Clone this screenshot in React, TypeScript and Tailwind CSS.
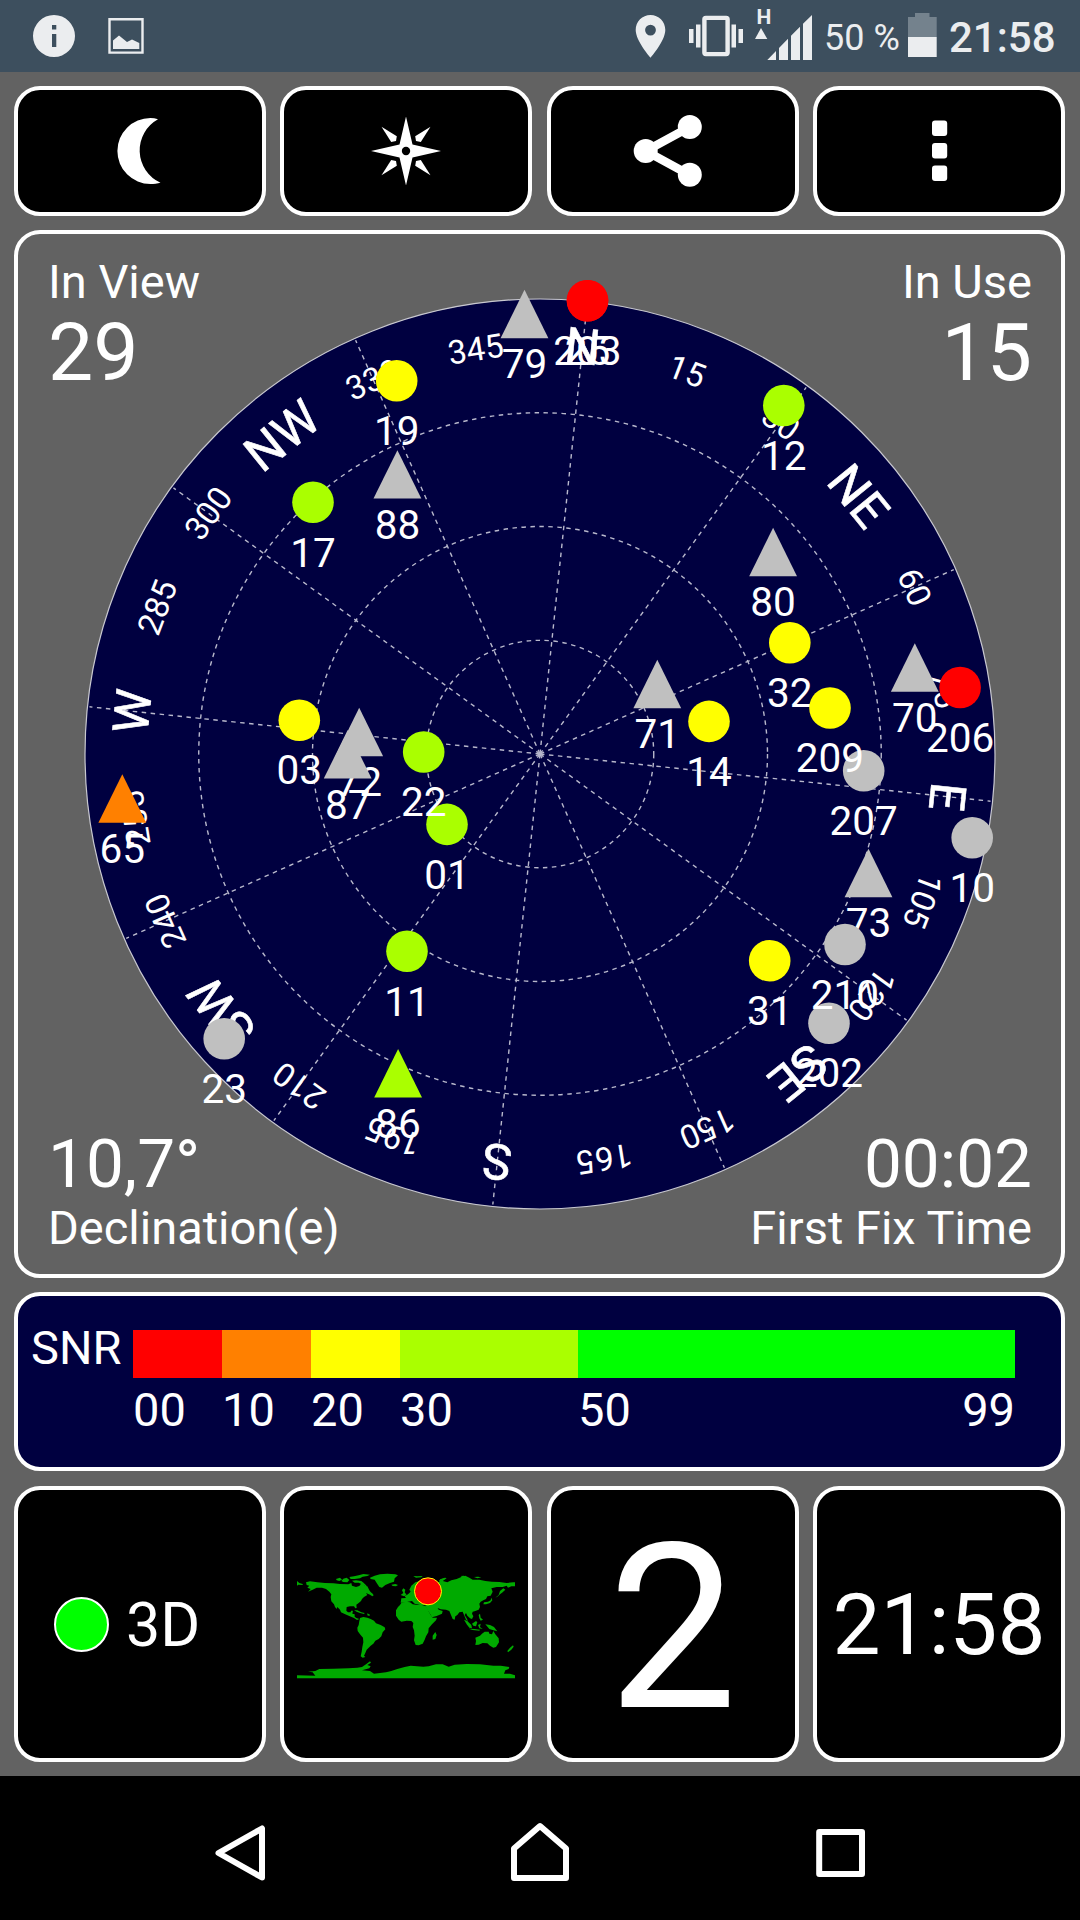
import React from 'react';

type Sat = { id: string; x: number; y: number; color: string; shape?: 'triangle' };

const GRAY = '#c0c0c0';
const RED = '#ff0000';
const ORANGE = '#ff8000';
const YELLOW = '#ffff00';
const LIME = '#aaff00';
const GREEN = '#00ff00';

// drawn in order, later ones lie on top
const satellites: Sat[] = [
  { id: '01', x: 447, y: 824.4, color: LIME },
  { id: '03', x: 299.3, y: 720.2, color: YELLOW },
  { id: '10', x: 972.2, y: 837.8, color: GRAY },
  { id: '11', x: 407, y: 951.3, color: LIME },
  { id: '12', x: 783.8, y: 405.5, color: LIME },
  { id: '14', x: 709, y: 721.4, color: YELLOW },
  { id: '17', x: 313, y: 502.3, color: LIME },
  { id: '19', x: 396.7, y: 380.7, color: YELLOW },
  { id: '22', x: 423.7, y: 752, color: LIME },
  { id: '23', x: 224.2, y: 1038.7, color: GRAY },
  { id: '31', x: 769.7, y: 960.7, color: YELLOW },
  { id: '32', x: 789.8, y: 642.8, color: YELLOW },
  { id: '65', x: 122.3, y: 798.5, color: ORANGE, shape: 'triangle' },
  { id: '70', x: 914.8, y: 667.5, color: GRAY, shape: 'triangle' },
  { id: '71', x: 657.3, y: 684, color: GRAY, shape: 'triangle' },
  { id: '72', x: 359.2, y: 732, color: GRAY, shape: 'triangle' },
  { id: '73', x: 868.5, y: 873, color: GRAY, shape: 'triangle' },
  { id: '79', x: 524.5, y: 314, color: GRAY, shape: 'triangle' },
  { id: '80', x: 773.1, y: 552, color: GRAY, shape: 'triangle' },
  { id: '86', x: 398.1, y: 1073.3, color: LIME, shape: 'triangle' },
  { id: '87', x: 347.7, y: 754.3, color: GRAY, shape: 'triangle' },
  { id: '88', x: 397.4, y: 474.4, color: GRAY, shape: 'triangle' },
  { id: '202', x: 829, y: 1023.2, color: GRAY },
  { id: '25', x: 587.5, y: 300.8, color: RED },
  { id: '203', x: 587.5, y: 300.8, color: RED },
  { id: '206', x: 960.1, y: 687.5, color: RED },
  { id: '207', x: 863.7, y: 770.8, color: GRAY },
  { id: '209', x: 830, y: 708, color: YELLOW },
  { id: '210', x: 845, y: 944.5, color: GRAY },
];

const directions: Record<number, string> = {
  0: 'N', 45: 'NE', 90: 'E', 135: 'SE', 180: 'S', 225: 'SW', 270: 'W', 315: 'NW',
};

const CX = 540;
const CY = 754;
const R = 455;
const HEADING = 5.98;

function Radar() {
  const bearings = Array.from({ length: 24 }, (_, i) => i * 15);
  return (
    <svg className="absolute left-0 top-0" width="1043" height="1040" viewBox="18 234 1043 1040">
      <circle cx={CX} cy={CY} r={R} fill="#000040" stroke="#c8c8d0" strokeWidth="1.2" />
      <g fill="none" stroke="#b8b8cc" strokeWidth="1.4" strokeDasharray="4.5 4.5">
        {[0.25, 0.5, 0.75].map((f) => (
          <circle key={f} cx={CX} cy={CY} r={R * f} />
        ))}
        {bearings.filter((b) => b % 30 === 0).map((b) => (
          <line key={b} x1={CX} y1={CY} x2={CX} y2={CY - R + 2} transform={`rotate(${b + HEADING} ${CX} ${CY})`} />
        ))}
      </g>
      <g fill="#fff" textAnchor="middle">
        {bearings.map((b) => (
          <text
            key={b}
            x={CX}
            y={CY - 410 + (directions[b] ? 17.5 : 11.5)}
            fontSize={directions[b] ? 49.5 : 33}
            transform={`rotate(${b + HEADING} ${CX} ${CY})`}
            className={directions[b] ? 'stroke-white [stroke-width:0.6px]' : ''}
          >
            {directions[b] ?? b}
          </text>
        ))}
      </g>
      <g fontSize="40.5" textAnchor="middle">
        {satellites.map((s) => (
          <g key={s.id}>
            {s.shape === 'triangle' ? (
              <path d={`M${s.x} ${s.y - 24.2}l23.9 48.4h-47.8z`} fill={s.color} />
            ) : (
              <circle cx={s.x} cy={s.y} r="20.8" fill={s.color} />
            )}
            <text x={s.x} y={s.y + 64.2} fill="#fff">{s.id}</text>
          </g>
        ))}
      </g>
    </svg>
  );
}

const snrBands = [
  { from: '00', width: 89, color: RED },
  { from: '10', width: 89, color: ORANGE },
  { from: '20', width: 89, color: YELLOW },
  { from: '30', width: 178, color: LIME },
  { from: '50', width: 437, color: GREEN },
];

function SnrBar() {
  return (
    <div className="mt-[14px] flex h-[179px] rounded-[26px] border-4 border-white bg-[#000040] pl-[13px] pt-[34px] text-[47px] leading-none">
      <span className="mt-[-6px] w-[102px] shrink-0">SNR</span>
      <div>
        <div className="flex h-12">
          {snrBands.map((b) => (
            <div key={b.from} style={{ width: b.width, background: b.color }} />
          ))}
        </div>
        <div className="mt-[8px] flex">
          {snrBands.map((b, i) => (
            <div key={b.from} className="flex justify-between" style={{ width: b.width }}>
              <span>{b.from}</span>
              {i === snrBands.length - 1 && <span>99</span>}
            </div>
          ))}
        </div>
      </div>
    </div>
  );
}

function StatusBar() {
  return (
    <div className="flex h-[72px] bg-[#3d4f5e]">
      <svg width="150" height="72" viewBox="0 0 150 72" fill="#ebedef">
        <path fillRule="evenodd" d="M54 15a21 21 0 1 0 0 42 21 21 0 0 0 0-42zM52 25h4.3v4.5H52zM52 34h4.3v13H52z" />
        <path d="M109.500 19.300h33v33.300h-33z" fill="none" stroke="#ebedef" strokeWidth="2.400" />
        <path d="M113 49V40.500L119 35.500L127 42L132 39.500L139.300 43V49z" />
      </svg>
      <svg className="ml-[480px]" width="190" height="72" viewBox="630 0 190 72" fill="#ebedef">
        <path fillRule="evenodd" d="M650.500 15c-8.200 0-14.800 6.600-14.800 15 0 11 14.800 27.700 14.800 27.700s14.800-16.700 14.800-27.700c0-8.400-6.600-15-14.800-15zm0 20.500a5.400 5.400 0 1 1 0-10.800 5.400 5.400 0 0 1 0 10.800z" />
        <path d="M689 29h4.500v14H689zM696 24.500h4.500v23H696zM731.500 24.500h4.500v23h-4.500zM738.500 29h4.500v14h-4.500z" />
        <rect x="704.400" y="17.900" width="23.200" height="36.200" rx="1.500" fill="none" stroke="#ebedef" strokeWidth="4.400" />
        <text x="763.800" y="24" textAnchor="middle" fontSize="21" fontWeight="700">H</text>
        <path d="M761 28L767.300 39H755z" />
        <path d="M767.300 60L776 51V60zM779 47.900L788 38.800V60H779zM791 35.800L800 26.700V60H791zM803 23.700L812 15V60H803z" />
      </svg>
      <span className="ml-[4px] w-[84px] text-[36px] leading-[76px] whitespace-nowrap text-[#ebedef]">50 %</span>
      <svg width="29" height="72" viewBox="908 0 29 72">
        <path d="M908 17h7v-4h14.500v4h7.200v20H908z" fill="#74828d" />
        <path d="M908 37h28.700v20H908z" fill="#ebedef" />
      </svg>
      <span className="ml-[12px] text-[42px] font-medium leading-[76px] text-[#ebedef]">21:58</span>
    </div>
  );
}

const MoonIcon = () => (
  <svg width="44" height="68" viewBox="117 117 44 68" fill="#fff" className="mr-[2px]">
    <path d="M158 119.300C155.500 118.400 153 118 150.400 118a33 33 0 0 0 0 66c3.500 0 7-.4 10.100-1.300A35.500 35.500 0 0 1 158 119.300z" />
  </svg>
);

const CompassIcon = () => (
  <svg width="72" height="72" viewBox="-36 -36 72 72" fill="#fff">
    <path d="M0-34.500L6.500-6.500L35 0L6.500 6.500L0 34.500L-6.500 6.500L-35 0L-6.500-6.500z" />
    {['scale(1 1)', 'scale(-1 1)', 'scale(1 -1)', 'scale(-1 -1)'].map((t) => (
      <path key={t} transform={t} d="M-24.500-24.200L-9.200-14.700L-10-10L-14.800-9z" />
    ))}
    <circle r="4.200" fill="#000" />
  </svg>
);

const ShareIcon = () => (
  <svg width="70" height="74" viewBox="633 114 70 74" fill="#fff" className="mr-[10px]">
    <path d="M689.800 127L645.700 151L689.800 175" fill="none" stroke="#fff" strokeWidth="8.500" />
    <circle cx="645.700" cy="151" r="12" />
    <circle cx="689.800" cy="127" r="12" />
    <circle cx="689.800" cy="174.700" r="12" />
  </svg>
);

const MoreIcon = () => (
  <svg width="16" height="62" viewBox="0 0 16 62" fill="#fff" className="ml-[1px]">
    <rect y=".5" width="15.200" height="15.500" rx="3" />
    <rect y="23" width="15.200" height="15.500" rx="3" />
    <rect y="45.500" width="15.200" height="15.500" rx="3" />
  </svg>
);

function WorldMap() {
  return (
    <svg width="218" height="106" viewBox="51 68 654 318" fill="#00aa00" className="mt-[3px]">
      {/* Americas */}
      <path d="M51 92L58 98L68 101V104L55 103L51 106zM78 96L90 93L112 96L135 98L160 99L180 101L205 102L214 98L216 106L228 110L238 107L243 100L240 96L250 97L254 106L262 108L268 120L274 128L270 133L258 128L262 134L252 140L246 146L243 152L236 158L229 163L230 173L226 174L222 168L210 168L200 170L199 181L204 186L212 186L213 181L219 181L217 190L224 192L224 199L229 203L238 206L231 209L222 203L206 196L194 191L183 186L180 178L172 170L170 176L165 170L162 162L154 153L152 140L154 132L148 124L138 116L126 112L110 112L98 118L84 124L92 116L82 112L88 106L80 104z" />
      <path d="M270 126L276 128L281 135L277 138L270 133z" />
      <path d="M168 86L180 82L186 88L178 92L170 90zM190 85L200 82L208 89L202 96L190 95L184 92zM208 80L222 78L236 75L250 71L270 73L262 77L248 79L240 84L224 86L212 86zM216 91L228 90L244 92L252 99L260 106L256 108L246 102L236 97L224 97z" />
      <path d="M222 180L232 180L244 186L254 188L252 191L240 188L230 184zM262 189L270 193L268 197L262 195z" />
      <path d="M240 203L250 200L262 202L272 206L282 211L288 219L302 224L314 231L316 237L308 246L304 258L296 266L286 271L280 280L272 286L266 292L260 298L256 308L252 316L256 320L248 322L242 318L245 304L247 290L250 276L249 262L240 252L233 242L232 232L236 224L238 212z" />
      {/* Greenland, Iceland */}
      <path d="M270 82L284 76L300 72L322 70L346 72L354 75L344 84L342 94L330 98L316 104L306 112L298 110L290 98L284 88L272 86zM334 103L346 101L354 104L348 108L338 107z" />
      {/* Eurasia */}
      <path d="M374 157L362 157L364 144L378 143L374 138L384 132L392 124L388 118L394 106L406 96L422 91L436 96L452 94L466 97L478 95L480 88L494 82L500 84L488 92L502 96L514 90L530 86L544 80L556 76L568 82L578 88L598 88L616 92L636 94L658 95L680 98L700 96L705 96V108L694 108L684 112L680 106L668 110L650 110L634 114L638 124L632 136L622 138L618 146L610 150L602 154L598 160L600 170L596 178L586 182L578 184L576 190L580 198L576 206L570 204L562 196L558 188L554 194L560 204L564 212L558 208L553 196L548 184L538 186L532 194L526 198L524 208L518 206L512 192L508 182L498 178L482 177L472 172L468 164L476 178L488 182L486 190L470 197L456 201L450 190L440 176L436 164L420 164L404 160L396 152L384 154z" />
      <path d="M362 134L370 128L366 120L370 114L376 118L374 126L380 134L372 138zM400 77L412 78L428 77L424 81L408 82zM476 92L482 86L498 82L492 88L482 94zM542 77L552 76L560 81L550 83zM582 80L594 79L604 81L592 84z" />
      {/* Japan, Kamchatka */}
      <path d="M660 122L670 114L676 118L668 126L660 132L654 138L646 142L656 134zM634 142L637 150L630 158L618 162L610 162L612 156L624 154L632 150z" />
      {/* Africa */}
      <path d="M364 158L378 154L390 156L398 162L412 164L426 164L438 168L444 180L452 194L458 202L471 202L468 210L456 222L446 234L445 246L438 258L434 268L428 280L416 285L407 284L402 270L404 256L402 240L398 230L400 218L394 212L380 211L364 214L356 208L348 196L348 180L354 170L360 164zM466 245L470 254L466 266L458 268L458 256z" />
      {/* Oceania */}
      <path d="M552 208L562 212L574 224L576 234L568 232L560 222zM576 220L588 212L592 216L588 228L580 226zM566 235L584 236L600 238L598 241L578 239zM596 194L600 190L602 202L609 208L602 211L598 204zM594 224L602 220L600 230L608 236L598 234zM616 222L630 224L642 230L652 243L640 240L628 236z" />
      <path d="M586 262L600 256L606 250L614 244L626 244L628 250L636 252L640 242L646 252L656 264L657 276L648 290L640 292L630 286L622 279L608 278L596 283L586 284L588 272zM690 292L699 285L701 289L694 298L684 306L682 302z" />
      {/* Antarctica */}
      <path d="M51 384V375L106 376L98 366L84 364L106 362L118 356L160 355L206 354L232 352L246 350L258 342L270 333L273 337L262 344L272 348L268 354L246 360L270 362L282 370L300 368L318 366L334 362L352 356L374 350L392 346L430 349L446 348L468 342L488 342L506 349L524 343L560 341L600 342L640 346L662 346L688 350L686 356L676 360L672 370L690 370L705 375V384z" />
      <circle cx="444" cy="123" r="40.500" fill="#ff0000" stroke="#ffff00" strokeWidth="3" />
    </svg>
  );
}

function Box({ className = 'justify-center', children }: { className?: string; children: React.ReactNode }) {
  return (
    <div className={`flex items-center rounded-[26px] border-4 border-white bg-black ${className}`}>
      {children}
    </div>
  );
}

export default function App() {
  return (
    <div className="flex h-[1920px] w-[1080px] flex-col overflow-hidden bg-[#626262] font-[Roboto,sans-serif] text-white">
      <StatusBar />

      <main className="flex h-[1704px] flex-col pl-[14px] pr-[15px] pt-[14px]">
        <div className="grid h-[130px] grid-cols-4 gap-[14.4px]">
          <Box><MoonIcon /></Box>
          <Box><CompassIcon /></Box>
          <Box><ShareIcon /></Box>
          <Box><MoreIcon /></Box>
        </div>

        <div className="relative mt-[14px] flex h-[1048px] flex-col justify-between rounded-[26px] border-4 border-white pb-[18px] pl-[30px] pr-[29px] pt-[20px]">
          <Radar />
          <div className="relative flex justify-between">
            <div>
              <div className="text-[47px] leading-[56px]">In View</div>
              <div className="text-[80.500px] leading-[85px]">29</div>
            </div>
            <div className="text-right">
              <div className="text-[47px] leading-[56px]">In Use</div>
              <div className="text-[80.500px] leading-[85px]">15</div>
            </div>
          </div>
          <div className="relative flex justify-between">
            <div>
              <div className="text-[67.500px] leading-[72px]">10,7°</div>
              <div className="text-[47px] leading-[56px]">Declination(e)</div>
            </div>
            <div className="text-right">
              <div className="text-[67.500px] leading-[72px]">00:02</div>
              <div className="text-[47px] leading-[56px]">First Fix Time</div>
            </div>
          </div>
        </div>

        <SnrBar />

        <div className="mt-[15px] grid h-[276px] grid-cols-4 gap-[14.4px]">
          <Box className="pl-[36px]">
            <div className="h-[55px] w-[55px] rounded-full border-2 border-white bg-[#00ff00]" />
            <span className="ml-[17px] pt-[2px] text-[61px] leading-none">3D</span>
          </Box>
          <Box><WorldMap /></Box>
          <Box><span className="pt-[10px] text-[230px] leading-none">2</span></Box>
          <Box><span className="pt-[3px] text-[85.500px] leading-none">21:58</span></Box>
        </div>
      </main>

      <nav className="h-36 bg-black">
        <svg width="1080" height="144" viewBox="0 1776 1080 144" fill="none" stroke="#fff" strokeWidth="6" strokeLinejoin="round">
          <path d="M262 1828.500V1877.500L218.500 1853z" />
          <path d="M514 1878V1848.500L540 1826L566 1848.500V1878z" />
          <path d="M819.200 1832H862V1874H819.200z" />
        </svg>
      </nav>
    </div>
  );
}
